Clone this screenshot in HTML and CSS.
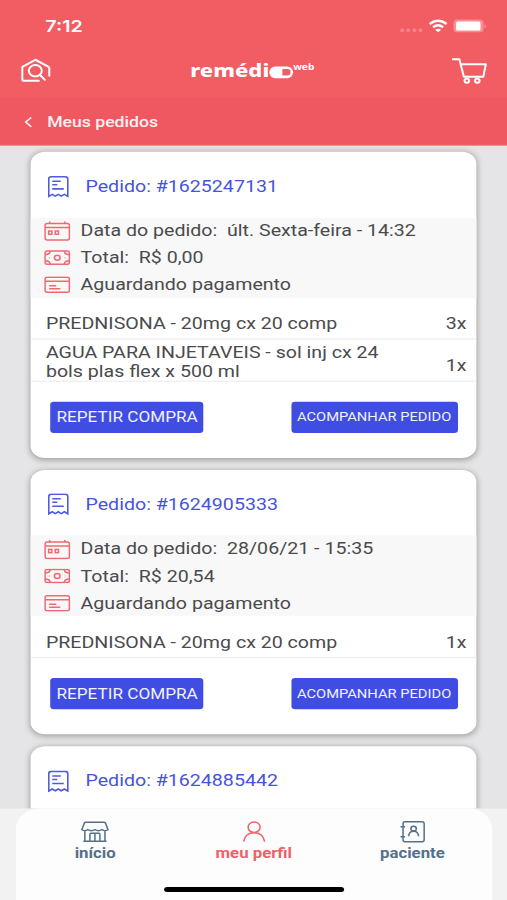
FILE: index.html
```
<!DOCTYPE html>
<html lang="pt-BR">

<head>
  <meta charset="UTF-8">
  <title>Remédio Web - Meus pedidos</title>
  <link rel="stylesheet" href="styles.css">
</head>

<body>
  <!-- ícones usados em mais de um pedido -->
  <svg class="sprite">
    <symbol id="recibo" viewBox="0 0 22 22" preserveAspectRatio="none">
      <path d="M1 20.5V3.5Q1 1 3.5 1H17.5Q20 1 20 3.5V20.5L16.5 18.5L13.5 20.3L10.5 18.5L7.5 20.3L4.5 18.500ZM4.500 5.5H13M4.500 9H9.500M4.500 13H16" />
    </symbol>
    <symbol id="calendario" viewBox="0 0 26 20" preserveAspectRatio="none">
      <rect x="1" y="2.500" width="24" height="16.500" rx="2" />
      <path d="M1 6.500H25M5.5 .5V3M20.500 .5V3" />
      <rect x="4.500" y="10" width="3.200" height="3.200" />
      <rect x="11" y="10" width="3.200" height="3.200" />
    </symbol>
    <symbol id="dinheiro" viewBox="0 0 26 15" preserveAspectRatio="none">
      <rect x="1" y="1" width="24" height="13" rx="2" />
      <path d="M6 1Q6 4.500 1 4.500M20 1Q20 4.500 25 4.500M1 10.500Q6 10.500 6 14M25 10.500Q20 10.500 20 14M5 7.500H5.600M20.400 7.500H21" />
      <ellipse cx="13" cy="7.500" rx="2.800" ry="2.500" />
    </symbol>
    <symbol id="cartao" viewBox="0 0 26 17" preserveAspectRatio="none">
      <rect x="1" y="1" width="24" height="15" rx="2" />
      <path d="M1 5H25M5 9.500H12M5 12.500H16" />
    </symbol>
  </svg>

  <div class="app">
    <!-- cabeçalho -->
    <header>
      <div class="status-bar">
        <span class="hora">7:12</span>
        <svg class="sinais" viewBox="0 0 86 16" preserveAspectRatio="none">
          <g fill="#f6858b">
            <circle cx="3" cy="12" r="1.900" />
            <circle cx="9" cy="12" r="1.900" />
            <circle cx="15.200" cy="12" r="1.900" />
            <circle cx="21.300" cy="12" r="1.900" />
          </g>
          <path d="M30.500 5.800Q39 -.500 47.500 5.800M34 9.200Q39 5.200 44 9.200" fill="none" stroke="#fff" stroke-width="2.500" />
          <path d="M36 11.500Q39 9.500 42 11.500L39 14Z" fill="#fff" />
          <rect x="54.500" y="1.500" width="30" height="12.500" rx="3.500" fill="#f88e93" />
          <rect x="57" y="3.300" width="24.500" height="9" rx="1.500" fill="#fff" />
          <rect x="85.300" y="6.300" width="1.500" height="3.500" rx=".7" fill="#f88e93" />
        </svg>
      </div>
      <div class="topo">
        <svg class="icone-casa" viewBox="0 0 30 24" preserveAspectRatio="none">
          <path d="M18 22.500H3Q1.500 22.500 1.500 21V8.500L14.500 1.500L27 8Q28.500 8.800 28.500 10V17.500" />
          <ellipse cx="14.500" cy="12.500" rx="6.500" ry="5.700" />
          <path d="M19 16.500L24 21.500" />
        </svg>
        <div class="logo">
          <span class="logo-nome">remédi</span><svg class="logo-pilula" viewBox="0 0 24 12" preserveAspectRatio="none">
            <rect x="1.200" y="1.500" width="21.300" height="9" rx="4.500" fill="none" stroke="#fff" stroke-width="2.600" />
            <path d="M5.500 1H13V11H5.500Q1 11 1 6Q1 1 5.500 1Z" fill="#fff" />
          </svg><span class="logo-web">web</span>
        </div>
        <svg class="icone-carrinho" viewBox="0 0 35 27" preserveAspectRatio="none">
          <path d="M1 2H7.500L12 19.500H31.500L34 7H9" />
          <ellipse cx="15" cy="23.500" rx="2.300" ry="2" />
          <ellipse cx="25.500" cy="23.500" rx="2.300" ry="2" />
        </svg>
      </div>
      <div class="voltar">
        <svg viewBox="0 0 8 12" preserveAspectRatio="none"><path d="M6.800 1L1.200 6L6.800 11" /></svg>
        <span>Meus pedidos</span>
      </div>
    </header>

    <!-- lista de pedidos -->
    <main>
      <section class="pedido">
        <h2><svg><use href="#recibo" /></svg><span>Pedido: #1625247131</span></h2>
        <div class="dados">
          <p><svg class="i-data"><use href="#calendario" /></svg><span>Data do pedido:&nbsp; últ. Sexta-feira - 14:32</span></p>
          <p><svg class="i-total"><use href="#dinheiro" /></svg><span>Total:&nbsp; R$ 0,00</span></p>
          <p><svg class="i-status"><use href="#cartao" /></svg><span>Aguardando pagamento</span></p>
        </div>
        <ul>
          <li><span class="produto">PREDNISONA - 20mg cx 20 comp</span><span>3x</span></li>
          <li class="duas-linhas"><span class="produto">AGUA PARA INJETAVEIS - sol inj cx 24<br>bols plas flex x 500 ml</span><span>1x</span></li>
        </ul>
        <div class="botoes">
          <button class="btn-repetir">REPETIR COMPRA</button>
          <button class="btn-acompanhar">ACOMPANHAR PEDIDO</button>
        </div>
      </section>

      <section class="pedido">
        <h2><svg><use href="#recibo" /></svg><span>Pedido: #1624905333</span></h2>
        <div class="dados">
          <p><svg class="i-data"><use href="#calendario" /></svg><span>Data do pedido:&nbsp; 28/06/21 - 15:35</span></p>
          <p><svg class="i-total"><use href="#dinheiro" /></svg><span>Total:&nbsp; R$ 20,54</span></p>
          <p><svg class="i-status"><use href="#cartao" /></svg><span>Aguardando pagamento</span></p>
        </div>
        <ul>
          <li><span class="produto">PREDNISONA - 20mg cx 20 comp</span><span>1x</span></li>
        </ul>
        <div class="botoes">
          <button class="btn-repetir">REPETIR COMPRA</button>
          <button class="btn-acompanhar">ACOMPANHAR PEDIDO</button>
        </div>
      </section>

      <section class="pedido">
        <h2><svg><use href="#recibo" /></svg><span>Pedido: #1624885442</span></h2>
        <div class="dados"></div>
      </section>
    </main>

    <!-- menu inferior -->
    <footer>
      <nav>
        <a class="aba">
          <svg viewBox="0 0 28 22" preserveAspectRatio="none">
            <path d="M5 1.500H23Q24 1.500 24.500 2.500L27 9Q24 11 21 9Q17.500 11 14 9Q10.500 11 7 9Q4 11 1 9L3.500 2.500Q4 1.500 5 1.500ZM4 10.500V20.500M24 10.500V20.500M2.500 20.500H25.500M9 20V13.500Q9 12.500 10 12.500H18Q19 12.500 19 13.500V20M14 12.500V20" />
          </svg>
          <span>início</span>
        </a>
        <a class="aba ativa">
          <svg viewBox="0 0 28 22" preserveAspectRatio="none">
            <ellipse cx="14" cy="6.500" rx="6" ry="5.200" />
            <path d="M3.500 21Q5 12 14 12T24.500 21" />
          </svg>
          <span>meu perfil</span>
        </a>
        <a class="aba">
          <svg viewBox="0 0 28 22" preserveAspectRatio="none">
            <rect x="5" y="1" width="21" height="20" rx="2" />
            <path d="M2.500 6H7M2.500 16H7M10.500 15.500Q11 10.500 15.500 10.500T20.500 15.500" />
            <ellipse cx="15.500" cy="8" rx="2.700" ry="2.300" />
          </svg>
          <span>paciente</span>
        </a>
      </nav>
      <div class="barra-home"></div>
    </footer>
  </div>
</body>

</html>
```

FILE: styles.css
```
html {
  overflow: hidden;
}

body {
  margin: 0;
  padding: 0;
  min-height: 900px;
  font-family: Roboto, "Liberation Sans", sans-serif;
}

/* tela de 414x896 esticada para ocupar a janela */
.app {
  display: flex;
  flex-direction: column;
  width: 414px;
  height: 896px;
  transform: scale(1.22464, 1.00446);
  transform-origin: 0 0;
  overflow: hidden;
  background-color: #e5e5e7;
}

.sprite {
  display: none;
}

svg {
  display: block;
  flex: none;
  overflow: visible;
}

/* cabeçalho */
header {
  flex: none;
  height: 145px;
  box-sizing: border-box;
  border-bottom: 1px solid #f28a90;
  color: white;
  background-color: #f25c63;
}

.status-bar {
  display: flex;
  justify-content: space-between;
  align-items: center;
  height: 51px;
  padding: 0 18px 0 37px;
}

.hora {
  font-family: Inter, sans-serif;
  font-size: 16px;
  font-weight: 600;
}

.sinais {
  width: 70px;
  height: 16px;
}

.topo {
  display: flex;
  justify-content: space-between;
  align-items: center;
  height: 46px;
  box-sizing: border-box;
  padding: 0 16.500px 8px 17px;
}

.topo > svg {
  fill: none;
  stroke: white;
  stroke-width: 2;
  stroke-linejoin: round;
  stroke-linecap: round;
}

.icone-casa {
  width: 24.500px;
  height: 24px;
}

.icone-carrinho {
  width: 28.500px;
  height: 27px;
}

.logo {
  display: flex;
  align-items: center;
  margin-left: 1.500px;
  line-height: 20px;
}

.logo-nome {
  font-family: "Noto Sans", sans-serif;
  font-size: 18px;
  font-weight: 800;
}

.logo-pilula {
  width: 19.500px;
  height: 12px;
  margin-top: 3px;
}

.logo-web {
  margin-top: -6px;
  font-family: "Noto Sans", sans-serif;
  font-size: 8.300px;
  font-weight: 700;
}

.voltar {
  display: flex;
  align-items: center;
  gap: 12px;
  height: 47px;
  box-sizing: border-box;
  padding: 1px 0 0 20px;
  background-color: #ef5860;
  color: #fff0f0;
  font-size: 14.400px;
  font-weight: 500;
}

.voltar svg {
  width: 6.500px;
  height: 11px;
  fill: none;
  stroke: white;
  stroke-width: 1.500;
}

/* pedidos */
main {
  flex: 1;
  min-height: 0;
  overflow: hidden;
  padding: 6px 25px 0 25.300px;
}

.pedido {
  margin-bottom: 12.200px;
  border-radius: 12px;
  background-color: white;
  box-shadow: 0 1px 6px rgba(0, 0, 0, 0.320);
  color: #4a4a4c;
  font-size: 16px;
}

.pedido h2 {
  display: flex;
  align-items: center;
  gap: 12.500px;
  height: 65.500px;
  margin: 0;
  padding: 3.500px 0 0 14px;
  box-sizing: border-box;
  color: #4653e0;
  font-size: 16px;
  font-weight: 400;
}

.pedido h2 svg {
  width: 18px;
  height: 22px;
  fill: none;
  stroke: #4f5be2;
  stroke-width: 1.600;
}

.dados {
  height: 80px;
  box-sizing: border-box;
  background-color: #f8f8f8;
}

.dados p {
  display: flex;
  align-items: center;
  gap: 8px;
  height: 26.800px;
  margin: 0;
  padding-left: 11px;
}

.dados svg {
  width: 21.500px;
  fill: none;
  stroke: #ee6a72;
  stroke-width: 1.500;
}

.i-data {
  height: 20px;
}

.i-total {
  height: 15px;
}

.i-status {
  height: 17px;
}

ul {
  margin: 0;
  padding: 0;
  list-style: none;
}

li {
  display: flex;
  justify-content: space-between;
  align-items: center;
  height: 41.500px;
  box-sizing: border-box;
  padding: 14px 8px 0 12.200px;
  border-bottom: 1px solid #ebebeb;
  line-height: 18.750px;
}

li.duas-linhas {
  padding-top: 4.500px;
}

li.duas-linhas span:last-child {
  padding-top: 7px;
}

.botoes {
  display: flex;
  justify-content: space-between;
  padding: 20.500px 15.500px 25.300px 16px;
}

button {
  height: 30.500px;
  padding: 0;
  border: none;
  border-radius: 3px;
  background-color: #404de3;
  color: #f1f2ff;
  font-family: inherit;
  white-space: nowrap;
}

.btn-repetir {
  width: 125px;
  font-size: 14px;
}

.btn-acompanhar {
  width: 136px;
  font-size: 12px;
}

/* menu inferior */
footer {
  flex: none;
  height: 91.500px;
  padding: 0 12.500px 0 13px;
  background-color: #f2f2f2;
}

nav {
  display: flex;
  height: 79px;
  border-radius: 20px 20px 0 0;
  background-color: #fdfdfd;
}

.aba {
  display: flex;
  flex: 1;
  flex-direction: column;
  align-items: center;
  padding-top: 12px;
  color: #557089;
  font-size: 13.700px;
  font-weight: 700;
  line-height: 21px;
}

.aba svg {
  width: 23px;
  height: 22px;
  fill: none;
  stroke: #557089;
  stroke-width: 1.500;
}

.ativa {
  color: #f06068;
}

.ativa svg {
  stroke: #f06068;
}

.barra-home {
  position: relative;
  height: 12.500px;
  background-color: #fdfdfd;
}

.barra-home::after {
  content: "";
  position: absolute;
  left: 120.500px;
  bottom: 8px;
  width: 147px;
  height: 5px;
  border-radius: 3px;
  background-color: black;
}
```
